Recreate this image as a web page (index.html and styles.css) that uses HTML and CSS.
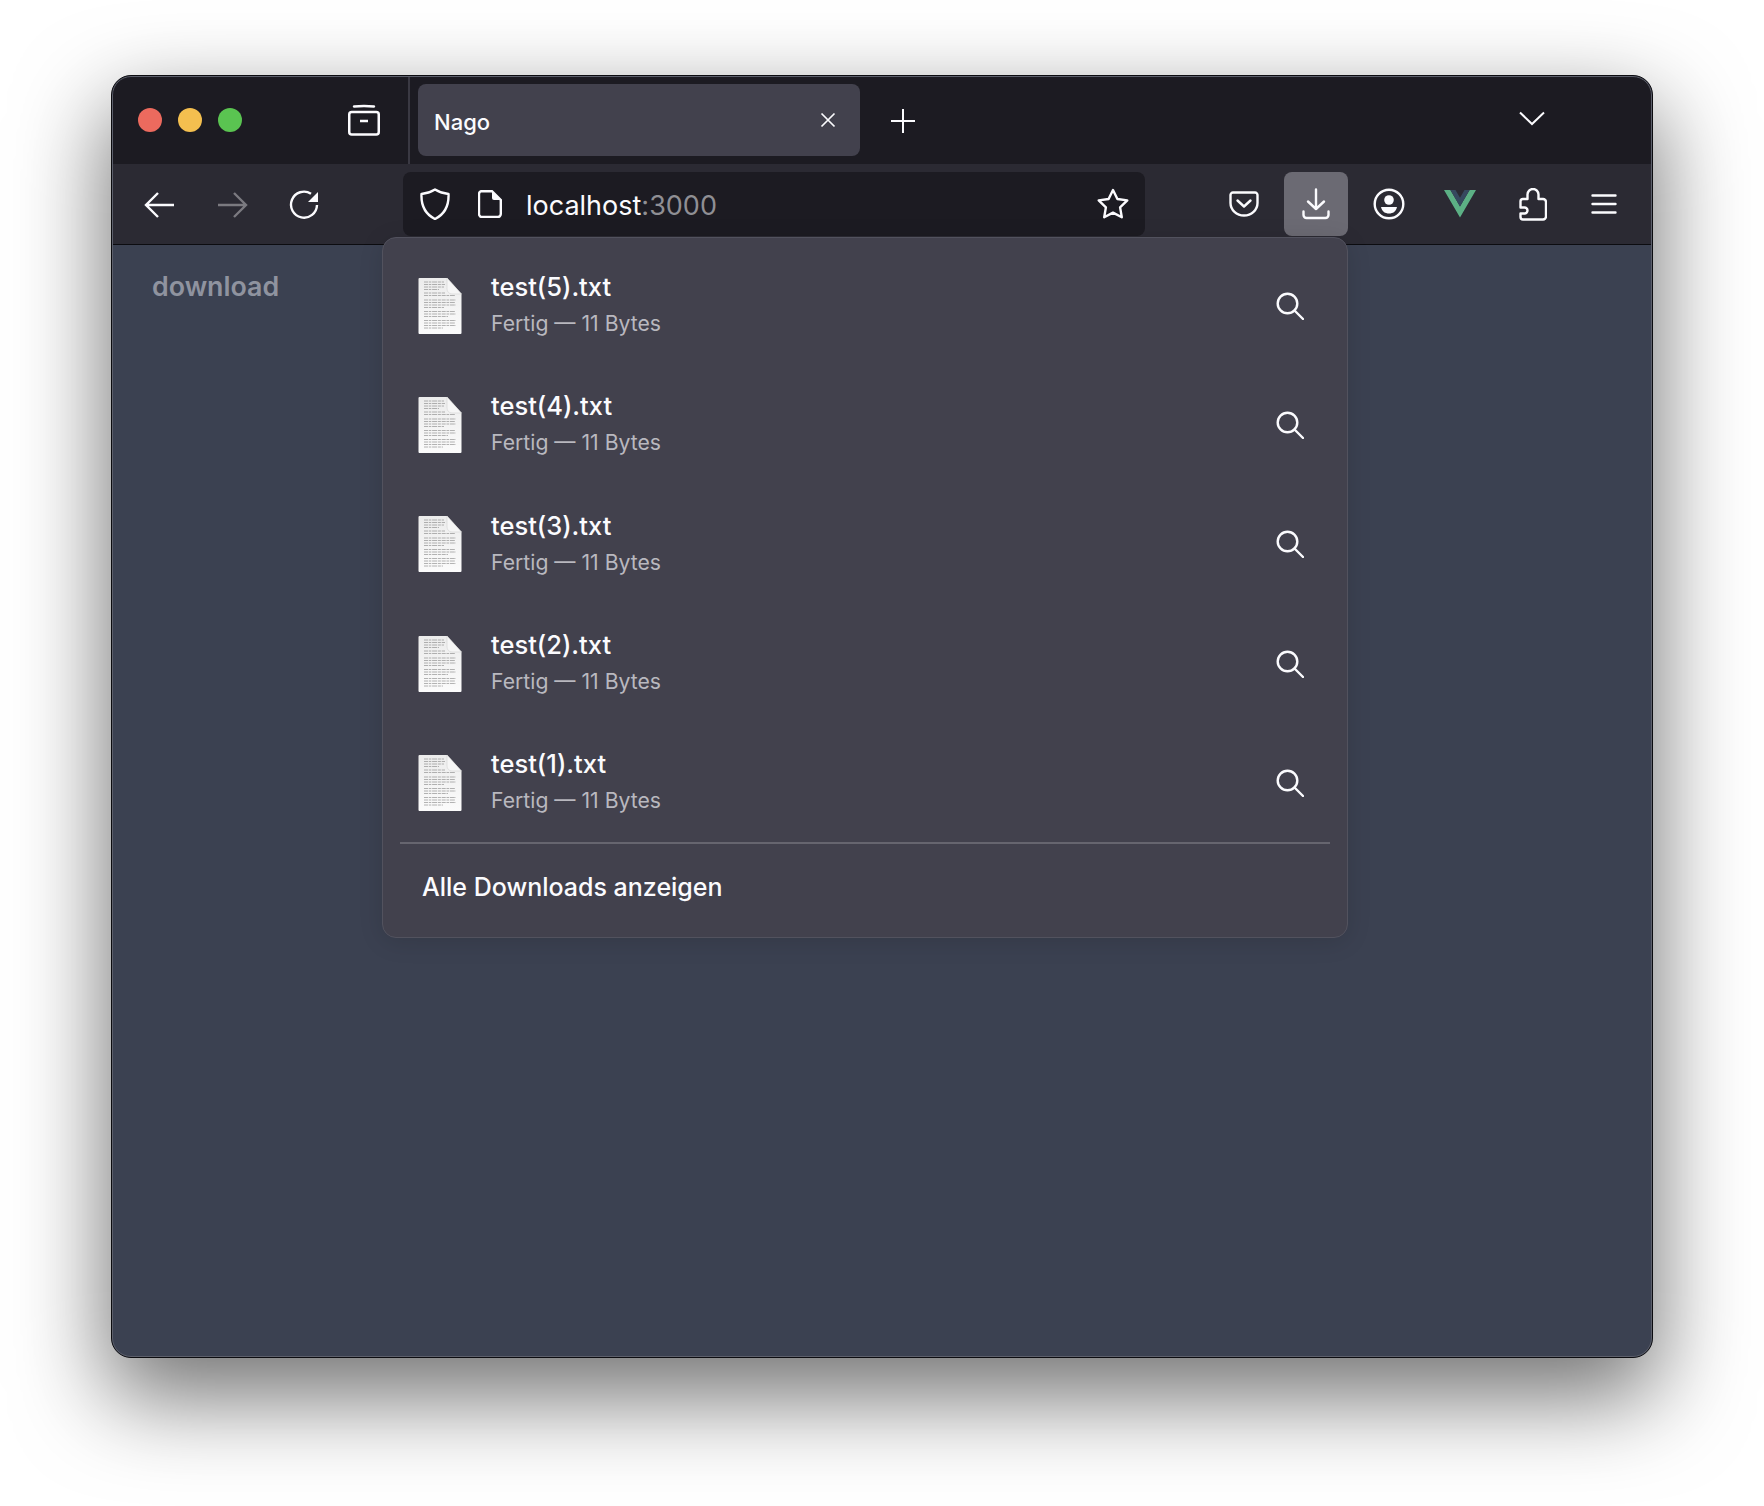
FILE: index.html
```html
<!DOCTYPE html>
<html lang="de">
<head>
    <meta charset="UTF-8">
    <meta name="viewport" content="width=device-width, initial-scale=1.0">
    <title>Nago</title>
    <link rel="stylesheet" href="styles.css">
</head>
<body>

<svg class="defs" width="0" height="0">
    <defs>
        <linearGradient id="paper" x1="0" y1="0" x2="0" y2="1">
            <stop offset="0" stop-color="#ececec"/>
            <stop offset="1" stop-color="#fbfbfb"/>
        </linearGradient>
        <symbol id="file" viewBox="0 0 44 58">
            <path d="M1.500 1 H29 L43.500 17 V56 a1 1 0 0 1 -1 1 H1.500 a1 1 0 0 1 -1 -1 V2 a1 1 0 0 1 1 -1z" fill="url(#paper)"/>
            <g fill="none" stroke="#777" stroke-width=".9" stroke-dasharray="4 .8 2.500 .8 5 .8 3 .8" opacity=".6">
                <path d="M6 5 H26 M6 7.500 H27 M6 10 H26 M6 12.500 H21"/>
                <path d="M6 16 H27 M6 18.500 H37"/>
                <path d="M6 23 H38 M6 25.500 H37 M6 28 H38 M6 30.500 H26"/>
                <path d="M6 34.500 H37 M6 37 H38 M6 39.500 H30"/>
                <path d="M6 43.500 H38 M6 46 H37 M6 48.500 H38 M6 51 H25"/>
            </g>
            <path d="M29 1 L43.500 17 H34 a5 5 0 0 1 -5 -5z" fill="#f6f6f6" stroke="#d4d4d4" stroke-width=".6"/>
        </symbol>
        <symbol id="search" viewBox="0 0 28 28">
            <circle cx="11.500" cy="11.500" r="9.800" fill="none" stroke="#fbfbfe" stroke-width="2.400"/>
            <path d="M18.500 18.500 L27 27" fill="none" stroke="#fbfbfe" stroke-width="2.400" stroke-linecap="round"/>
        </symbol>
    </defs>
</svg>

<div class="window">

    <div class="titlebar">
        <div class="lights">
            <span class="light red"></span>
            <span class="light yellow"></span>
            <span class="light green"></span>
        </div>
        <svg class="tabs-icon" width="32" height="32" viewBox="0 0 32 32" fill="none" stroke="#fbfbfe" stroke-width="2.500">
            <rect x="1.250" y="8" width="29.500" height="22.500" rx="2.500"/>
            <path d="M6 2.500 Q16 1.500 26 2.500" stroke-linecap="round"/>
            <path d="M12 17 H20"/>
        </svg>
        <div class="tab">
            <span class="tab-title">Nago</span>
            <svg width="16" height="16" viewBox="0 0 16 16" fill="none" stroke="#fbfbfe" stroke-width="1.700">
                <path d="M1.500 1.500 L14.500 14.500 M14.500 1.500 L1.500 14.500"/>
            </svg>
        </div>
        <svg class="new-tab" width="26" height="26" viewBox="0 0 26 26" fill="none" stroke="#fbfbfe" stroke-width="2">
            <path d="M13 1 V25 M1 13 H25"/>
        </svg>
        <svg class="tab-list" width="26" height="15" viewBox="0 0 26 15" fill="none" stroke="#fbfbfe" stroke-width="2">
            <path d="M1 1.500 L13 13 L25 1.500"/>
        </svg>
    </div>

    <div class="toolbar">
        <div class="nav">
            <button class="tool">
                <svg width="32" height="28" viewBox="0 0 32 28" fill="none" stroke="#fbfbfe" stroke-width="2.400">
                    <path d="M30 14 H3 M14 2 L2 14 L14 26"/>
                </svg>
            </button>
            <button class="tool">
                <svg width="32" height="28" viewBox="0 0 32 28" fill="none" stroke="#7b7a80" stroke-width="2.400">
                    <path d="M2 14 H29 M18 2 L30 14 L18 26"/>
                </svg>
            </button>
            <button class="tool">
                <svg width="32" height="32" viewBox="0 0 32 32" fill="none" stroke="#fbfbfe" stroke-width="2.400">
                    <path d="M23 4.700 A13 13 0 1 0 29 16"/>
                    <path d="M30 3 V13 H20z" fill="#fbfbfe" stroke="none"/>
                </svg>
            </button>
        </div>

        <div class="urlbar">
            <svg width="30" height="32" viewBox="0 0 30 32" fill="none" stroke="#fbfbfe" stroke-width="2.400" stroke-linejoin="round">
                <path d="M15 1.500 C19 4 23 5.500 28.500 6 C29 17 25 26 15 31 C5 26 1 17 1.500 6 C7 5.500 11 4 15 1.500z"/>
            </svg>
            <svg class="page-icon" width="24" height="28" viewBox="0 0 24 28" fill="none" stroke="#fbfbfe" stroke-width="2.400">
                <path d="M4 1.200 H14 L22.800 10 V24 a3 3 0 0 1 -3 3 H4 a3 3 0 0 1 -3 -3 V4 a3 3 0 0 1 3 -3z"/>
                <path d="M14 1.200 L22.800 10 H16 a2 2 0 0 1 -2 -2z" fill="#fbfbfe" stroke="none"/>
            </svg>
            <span class="url">localhost<span class="url-port">:3000</span></span>
            <svg class="star" width="32" height="32" viewBox="0 0 32 32" fill="none" stroke="#fbfbfe" stroke-width="2.400" stroke-linejoin="round">
                <path d="M16 2 L20.400 11 L30.300 12.400 L23.100 19.400 L24.800 29.300 L16 24.600 L7.200 29.300 L8.900 19.400 L1.700 12.400 L11.600 11z"/>
            </svg>
        </div>

        <div class="actions">
            <button class="tool">
                <svg width="30" height="26" viewBox="0 0 30 26" fill="none" stroke="#fbfbfe" stroke-width="2.400" stroke-linecap="round" stroke-linejoin="round">
                    <path d="M4 1.500 H26 a2.500 2.500 0 0 1 2.500 2.500 V12 a13.500 12.500 0 0 1 -27 0 V4 a2.500 2.500 0 0 1 2.500 -2.500z"/>
                    <path d="M8.500 9.500 L15 15.500 L21.500 9.500"/>
                </svg>
            </button>
            <button class="tool active">
                <svg width="28" height="32" viewBox="0 0 28 32" fill="none" stroke="#fbfbfe" stroke-width="2.400" stroke-linecap="round" stroke-linejoin="round">
                    <path d="M14 1.500 V21 M6 13.500 L14 21 L22 13.500"/>
                    <path d="M1.500 23.500 V27 a3 3 0 0 0 3 3 H23.500 a3 3 0 0 0 3 -3 V23.500"/>
                </svg>
            </button>
            <button class="tool">
                <svg class="nudge" width="32" height="32" viewBox="0 0 32 32" fill="none">
                    <circle cx="16" cy="16" r="14.300" stroke="#fbfbfe" stroke-width="2.400"/>
                    <circle cx="16" cy="12" r="4.800" fill="#fbfbfe"/>
                    <path d="M8 19 H24 C23 23.500 20 25.500 16 25.500 C12 25.500 9 23.500 8 19z" fill="#fbfbfe"/>
                </svg>
            </button>
            <button class="tool">
                <svg width="32" height="28" viewBox="0 0 32 28">
                    <path d="M0 0 H6.400 L16 16.500 L25.600 0 H32 L16 27.500z" fill="#5cb085"/>
                    <path d="M6.400 0 H11.500 L16 7.700 L20.500 0 H25.600 L16 16.500z" fill="#36495f"/>
                </svg>
            </button>
            <button class="tool">
                <svg class="nudge" width="28" height="33" viewBox="0 0 28 33" fill="none" stroke="#fbfbfe" stroke-width="2.400" stroke-linejoin="round">
                    <path d="M4 31.500 H24 a3 3 0 0 0 3 -3 V14 a3 3 0 0 0 -3 -3 H19.500 V6.500 a5.500 5.500 0 0 0 -11 0 V11 H4 a2.500 2.500 0 0 0 -2.500 2.500 V19.500 H5.500 a3 3 0 0 1 0 6 H1.500 V29 a2.500 2.500 0 0 0 2.500 2.500z"/>
                </svg>
            </button>
            <button class="tool">
                <svg width="26" height="20" viewBox="0 0 26 20" fill="none" stroke="#fbfbfe" stroke-width="2.400" stroke-linecap="round">
                    <path d="M1.500 1.500 H24.500 M1.500 10 H24.500 M1.500 18.500 H24.500"/>
                </svg>
            </button>
        </div>
    </div>

    <div class="content">
        <p class="link">download</p>
    </div>

    <div class="panel">
        <div class="download">
            <svg class="file-icon"><use href="#file"/></svg>
            <div class="info">
                <span class="name">test(5).txt</span>
                <span class="status">Fertig — 11 Bytes</span>
            </div>
            <svg class="show"><use href="#search"/></svg>
        </div>
        <div class="download">
            <svg class="file-icon"><use href="#file"/></svg>
            <div class="info">
                <span class="name">test(4).txt</span>
                <span class="status">Fertig — 11 Bytes</span>
            </div>
            <svg class="show"><use href="#search"/></svg>
        </div>
        <div class="download">
            <svg class="file-icon"><use href="#file"/></svg>
            <div class="info">
                <span class="name">test(3).txt</span>
                <span class="status">Fertig — 11 Bytes</span>
            </div>
            <svg class="show"><use href="#search"/></svg>
        </div>
        <div class="download">
            <svg class="file-icon"><use href="#file"/></svg>
            <div class="info">
                <span class="name">test(2).txt</span>
                <span class="status">Fertig — 11 Bytes</span>
            </div>
            <svg class="show"><use href="#search"/></svg>
        </div>
        <div class="download">
            <svg class="file-icon"><use href="#file"/></svg>
            <div class="info">
                <span class="name">test(1).txt</span>
                <span class="status">Fertig — 11 Bytes</span>
            </div>
            <svg class="show"><use href="#search"/></svg>
        </div>
        <div class="panel-footer">Alle Downloads anzeigen</div>
    </div>

</div>

</body>
</html>
```

FILE: styles.css
```css
html {
    height: 100%;
}
body {
    box-sizing: border-box;
    min-height: 100%;
    margin: 0;
    padding: 75px 0 0 111px;
    background-color: #ffffff;
    font-family: Inter, "Liberation Sans", sans-serif;
    color: #fbfbfe;
    overflow: hidden;
}
.defs {
    position: absolute;
}
.window {
    position: relative;
    box-sizing: border-box;
    width: 1542px;
    height: 1283px;
    border: 1px solid #0c0c10;
    border-radius: 20px;
    overflow: hidden;
    background-color: #3b4151;
    box-shadow: 0 36px 90px 4px rgba(0, 0, 0, 0.55);
}
.window::after {
    content: "";
    position: absolute;
    inset: 0;
    border: 1px solid #5c5f6b;
    border-radius: 19px;
    pointer-events: none;
}
.titlebar {
    display: flex;
    align-items: center;
    height: 88px;
    background-color: #1c1b22;
}
.lights {
    display: flex;
    gap: 16px;
    margin-left: 26px;
}
.light {
    width: 24px;
    height: 24px;
    border-radius: 50%;
}
.red {
    background-color: #ec6a5e;
}
.yellow {
    background-color: #f4bf4f;
}
.green {
    background-color: #5ac451;
}
.tabs-icon {
    height: 88px;
    margin-left: 106px;
    padding-right: 28px;
    border-right: 2px solid #3a3943;
}
.tab {
    display: flex;
    align-items: center;
    justify-content: space-between;
    box-sizing: border-box;
    width: 442px;
    height: 72px;
    margin-left: 8px;
    padding: 0 24px 0 16px;
    background-color: #42414d;
    border-radius: 8px;
}
.tab-title {
    position: relative;
    top: 2px;
    font-size: 22px;
    font-weight: 500;
}
.new-tab {
    margin-left: 30px;
    margin-top: 2px;
}
.tab-list {
    margin-left: 603px;
    margin-bottom: 3px;
}
.toolbar {
    display: flex;
    align-items: center;
    box-sizing: border-box;
    height: 81px;
    padding: 0 16px;
    background-color: #2b2a33;
    border-bottom: 1px solid #0c0c10;
}
.nav,
.actions {
    display: flex;
    gap: 8px;
}
.nav svg {
    margin-top: 2px;
}
.nudge {
    margin-left: 2px;
}
.actions {
    margin-left: auto;
}
.tool {
    display: flex;
    align-items: center;
    justify-content: center;
    width: 64px;
    height: 64px;
    padding: 0;
    border: none;
    border-radius: 8px;
    background: none;
}
.active {
    background-color: #6b6a73;
}
.urlbar {
    display: flex;
    align-items: center;
    box-sizing: border-box;
    width: 742px;
    height: 64px;
    margin-left: 67px;
    padding: 0 14px 0 17px;
    background-color: #1c1b22;
    border-radius: 8px;
}
.page-icon {
    margin-left: 28px;
}
.url {
    position: relative;
    top: 1px;
    margin-left: 24px;
    font-size: 27px;
}
.url-port {
    color: #8f8f94;
}
.star {
    margin-left: auto;
    margin-right: 2px;
}
.content {
    padding: 25px 40px;
}
.link {
    margin: 0;
    font-size: 26.800px;
    font-weight: 600;
    color: #8f939f;
}
.panel {
    position: absolute;
    left: 270px;
    top: 161px;
    box-sizing: border-box;
    width: 966px;
    height: 701px;
    padding-top: 8px;
    background-color: #42414d;
    border: 1px solid #52525e;
    border-radius: 14px;
    box-shadow: 0 4px 24px rgba(0, 0, 0, 0.12);
}
.download {
    display: flex;
    align-items: center;
    height: 119.300px;
    padding: 0 43px 0 35px;
}
.file-icon {
    width: 44px;
    height: 58px;
    flex-shrink: 0;
}
.info {
    display: flex;
    flex-direction: column;
    gap: 9px;
    margin-left: 29px;
    padding-bottom: 2px;
}
.name {
    font-size: 25.500px;
    font-weight: 500;
    line-height: 28px;
}
.status {
    font-size: 21.200px;
    line-height: 26px;
    color: #b9b8bf;
}
.show {
    width: 28px;
    height: 28px;
    margin-left: auto;
}
.panel-footer {
    display: flex;
    align-items: center;
    box-sizing: border-box;
    height: 92px;
    margin: 0 17px;
    padding: 0 0 5px 22px;
    border-top: 2px solid #66656f;
    font-size: 25px;
    font-weight: 500;
}
```
